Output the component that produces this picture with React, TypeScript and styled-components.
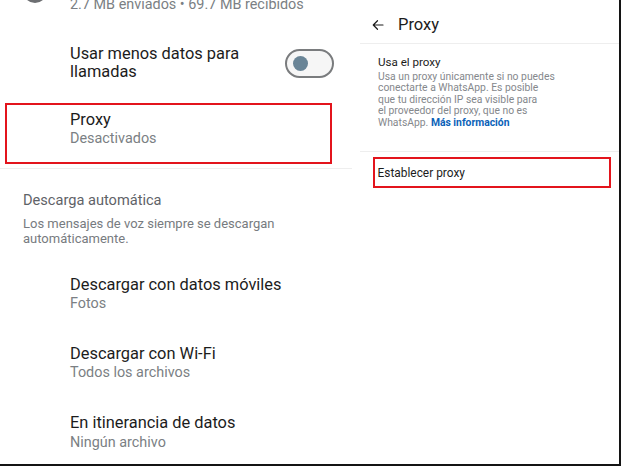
import React from 'react';
import styled, { createGlobalStyle } from 'styled-components';

const GlobalStyle = createGlobalStyle`
  html, body {
    margin: 0;
    padding: 0;
    background: #ffffff;
  }
  body {
    font-family: Roboto, "Liberation Sans", Arial, sans-serif;
    color: #1d1d1d;
  }
`;

const Frame = styled.div`
  width: 621px;
  height: 466px;
  box-sizing: border-box;
  border-right: 2px solid #141414;
  border-bottom: 2px solid #141414;
  display: flex;
  overflow: hidden;
  background: #ffffff;
`;

const LeftPanel = styled.div`
  width: 352px;
  flex-shrink: 0;
  overflow: hidden;
`;

// the list is scrolled: its first row sits partly above the top edge
const ScrollContent = styled.div`
  margin-top: -39px;
  display: flex;
  flex-direction: column;
`;

const Row = styled.div<{ $padTop?: number; $padBottom?: number }>`
  display: flex;
  align-items: flex-start;
  padding: ${(p) => p.$padTop ?? 15}px 18px ${(p) => p.$padBottom ?? 15.8}px 0;
`;

const IconSlot = styled.div`
  width: 70px;
  flex-shrink: 0;
  display: flex;
  justify-content: center;
  padding-top: 3px;
`;

const GrayIcon = styled.div`
  width: 24px;
  height: 24px;
  border-radius: 50%;
  background: #6d6f72;
`;

const RowText = styled.div`
  flex: 1;
  display: flex;
  flex-direction: column;
`;

const Title = styled.div`
  font-size: 16.4px;
  line-height: 18.5px;
  color: #1c1c1c;
`;

const Subtitle = styled.div`
  font-size: 14.4px;
  line-height: 20px;
  color: #7b7f84;
`;

const ToggleRow = styled(Row)`
  align-items: center;
`;

const Toggle = styled.div`
  width: 49px;
  height: 29px;
  box-sizing: border-box;
  border: 2px solid #7a7c7e;
  border-radius: 15px;
  background: #f6f6f6;
  display: flex;
  align-items: center;
  padding-left: 6px;
  flex-shrink: 0;
`;

const Knob = styled.div`
  width: 15px;
  height: 15px;
  border-radius: 50%;
  background: #6a8597;
`;

const HighlightBox = styled.div<{ $pad: string; $margin: string }>`
  border: 2px solid #e3141c;
  padding: ${(p) => p.$pad};
  margin: ${(p) => p.$margin};
`;

const ProxyRowText = styled(RowText)`
  padding-left: 63px;
`;

const Section = styled.div`
  margin-top: 4px;
  border-top: 1px solid #eeeeee;
  padding: 21px 18px 14.5px 23px;
`;

const SectionHeader = styled.div`
  font-size: 14.6px;
  line-height: 20px;
  color: #5f6368;
`;

const SectionNote = styled.div`
  margin-top: 6px;
  font-size: 13px;
  line-height: 15px;
  color: #777b80;
`;

const RightPanel = styled.div`
  flex: 1;
  margin-left: 8px;
  display: flex;
  flex-direction: column;
`;

const Header = styled.div`
  height: 44px;
  box-sizing: border-box;
  padding: 6px 0 0 12px;
  border-bottom: 1px solid #eeeeee;
  display: flex;
  align-items: center;
  gap: 14px;
`;

const HeaderTitle = styled.div`
  font-size: 16.5px;
  line-height: 20px;
  color: #1c1c1c;
`;

const InfoBlock = styled.div`
  padding: 11px 8px 22px 18px;
  border-bottom: 1px solid #eeeeee;
`;

const InfoTitle = styled.div`
  font-size: 11.6px;
  line-height: 14px;
  color: #1c1c1c;
`;

const InfoText = styled.div`
  margin-top: 1.6px;
  font-size: 10.35px;
  line-height: 11.6px;
  color: #85888c;
  white-space: nowrap;
`;

const Link = styled.span`
  color: #0b62b8;
  font-weight: 700;
`;

const ActionText = styled.div`
  font-size: 11.9px;
  line-height: 14px;
  color: #1c1c1c;
  padding-left: 2.5px;
`;

function BackArrow() {
  return (
    <svg width="12" height="12" viewBox="0 0 24 24" fill="none">
      <path
        d="M22 12H3M11 3.5L2.5 12L11 20.5"
        stroke="#1c1c1c"
        strokeWidth="2.4"
        strokeLinecap="round"
        strokeLinejoin="round"
      />
    </svg>
  );
}

const downloadRows = [
  { title: 'Descargar con datos móviles', value: 'Fotos' },
  { title: 'Descargar con Wi-Fi', value: 'Todos los archivos' },
  { title: 'En itinerancia de datos', value: 'Ningún archivo' },
];

export default function App() {
  return (
    <>
      <GlobalStyle />
      <Frame>
        <LeftPanel>
          <ScrollContent>
            <Row $padBottom={15}>
              <IconSlot>
                <GrayIcon />
              </IconSlot>
              <RowText>
                <Title>Uso de red</Title>
                <Subtitle>2.7 MB enviados • 69.7 MB recibidos</Subtitle>
              </RowText>
            </Row>

            <ToggleRow $padTop={15} $padBottom={15}>
              <IconSlot />
              <RowText>
                <Title>Usar menos datos para</Title>
                <Title>llamadas</Title>
              </RowText>
              <Toggle>
                <Knob />
              </Toggle>
            </ToggleRow>

            <HighlightBox $pad="6px 0 13px 0" $margin="6px 20px 0 5px">
              <ProxyRowText>
                <Title>Proxy</Title>
                <Subtitle>Desactivados</Subtitle>
              </ProxyRowText>
            </HighlightBox>

            <Section>
              <SectionHeader>Descarga automática</SectionHeader>
              <SectionNote>
                Los mensajes de voz siempre se descargan
                <br />
                automáticamente.
              </SectionNote>
            </Section>

            {downloadRows.map((item) => (
              <Row key={item.title}>
                <IconSlot />
                <RowText>
                  <Title>{item.title}</Title>
                  <Subtitle>{item.value}</Subtitle>
                </RowText>
              </Row>
            ))}
          </ScrollContent>
        </LeftPanel>

        <RightPanel>
          <Header>
            <BackArrow />
            <HeaderTitle>Proxy</HeaderTitle>
          </Header>

          <InfoBlock>
            <InfoTitle>Usa el proxy</InfoTitle>
            <InfoText>
              Usa un proxy únicamente si no puedes
              <br />
              conectarte a WhatsApp. Es posible
              <br />
              que tu dirección IP sea visible para
              <br />
              el proveedor del proxy, que no es
              <br />
              WhatsApp. <Link>Más información</Link>
            </InfoText>
          </InfoBlock>

          <HighlightBox $pad="7px 0 6px 0" $margin="5px 8px 0 13px">
            <ActionText>Establecer proxy</ActionText>
          </HighlightBox>
        </RightPanel>
      </Frame>
    </>
  );
}
